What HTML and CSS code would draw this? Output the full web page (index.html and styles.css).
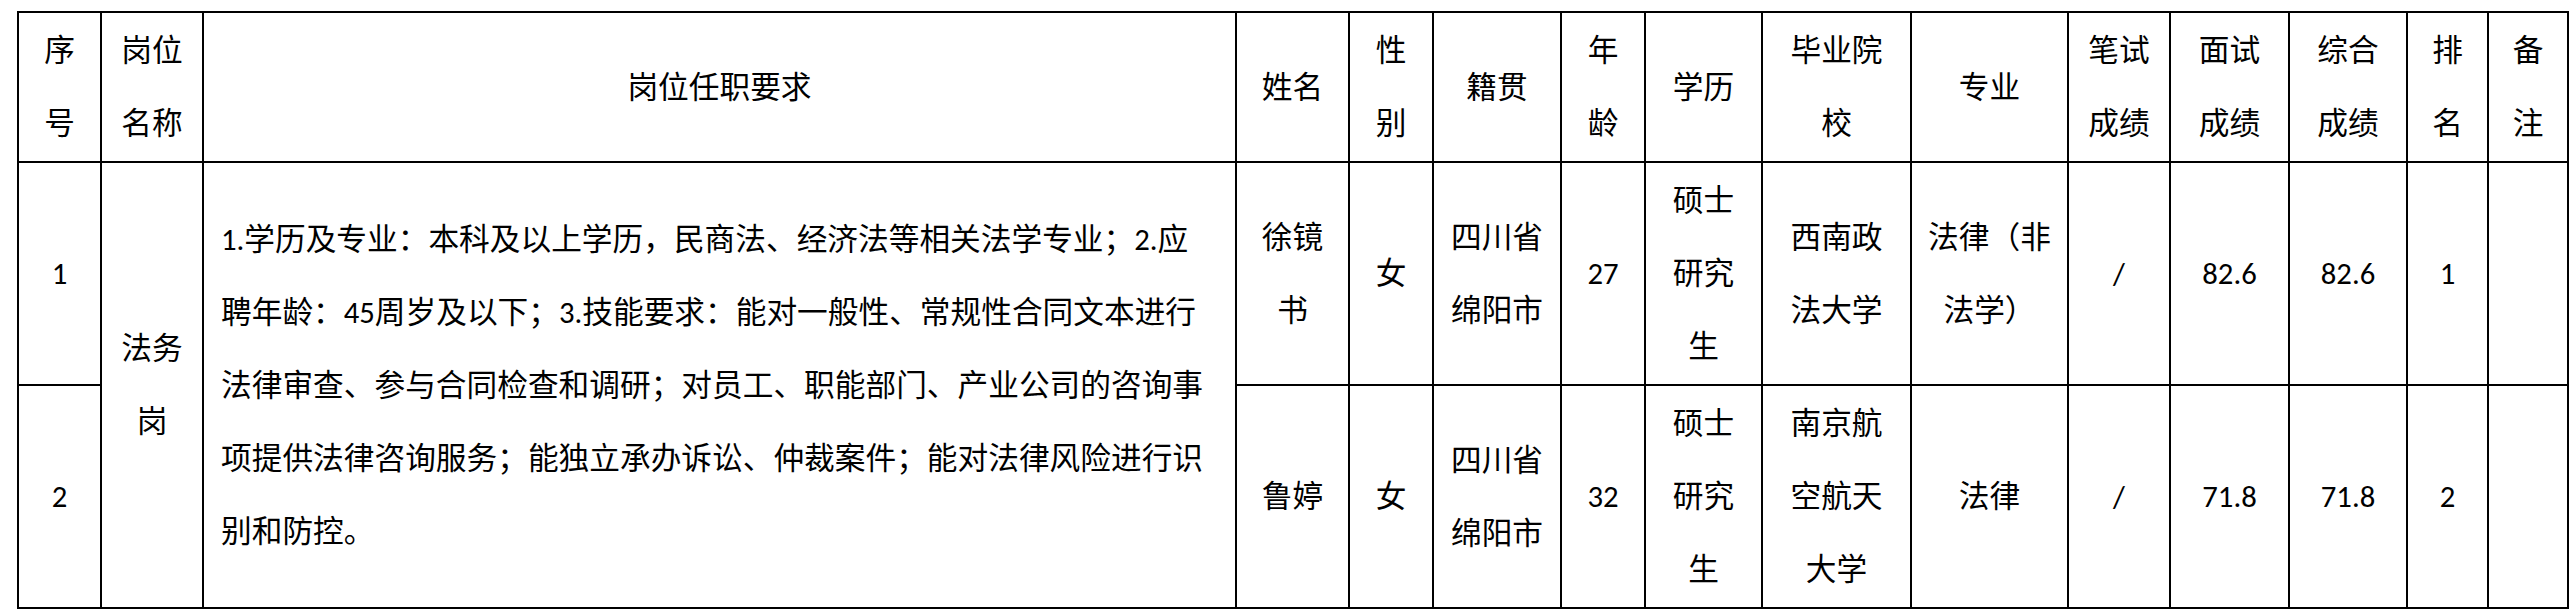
FILE: index.html
```html
<!DOCTYPE html>
<html lang="zh-CN">
<head>
<meta charset="utf-8">
<title>岗位任职要求</title>
<link rel="stylesheet" href="styles.css">
</head>
<body>
<table class="grid">
  <tr class="hdr">
    <th class="c1">序<br>号</th>
    <th class="c2">岗位<br>名称</th>
    <th class="c3">岗位任职要求</th>
    <th class="c4">姓名</th>
    <th class="c5">性<br>别</th>
    <th class="c6">籍贯</th>
    <th class="c7">年<br>龄</th>
    <th class="c8">学历</th>
    <th class="c9">毕业院<br>校</th>
    <th class="c10">专业</th>
    <th class="c11">笔试<br>成绩</th>
    <th class="c12">面试<br>成绩</th>
    <th class="c13">综合<br>成绩</th>
    <th class="c14">排<br>名</th>
    <th class="c15">备<br>注</th>
  </tr>
  <tr class="row">
    <td>1</td>
    <td rowspan="2">法务<br>岗</td>
    <td rowspan="2" class="desc">1.学历及专业：本科及以上学历，民商法、经济法等相关法学专业；2.应<br>聘年龄：45周岁及以下；3.技能要求：能对一般性、常规性合同文本进行<br>法律审查、参与合同检查和调研；对员工、职能部门、产业公司的咨询事<br>项提供法律咨询服务；能独立承办诉讼、仲裁案件；能对法律风险进行识<br>别和防控。</td>
    <td>徐镜<br>书</td>
    <td>女</td>
    <td>四川省<br>绵阳市</td>
    <td>27</td>
    <td>硕士<br>研究<br>生</td>
    <td>西南政<br>法大学</td>
    <td>法律（非<br>法学）</td>
    <td>/</td>
    <td>82.6</td>
    <td>82.6</td>
    <td>1</td>
    <td></td>
  </tr>
  <tr class="row">
    <td>2</td>
    <td>鲁婷</td>
    <td>女</td>
    <td>四川省<br>绵阳市</td>
    <td>32</td>
    <td>硕士<br>研究<br>生</td>
    <td>南京航<br>空航天<br>大学</td>
    <td>法律</td>
    <td>/</td>
    <td>71.8</td>
    <td>71.8</td>
    <td>2</td>
    <td></td>
  </tr>
</table>
</body>
</html>
```

FILE: styles.css
```css
html, body {
  margin: 0;
  padding: 0;
  background: #ffffff;
}

body {
  padding: 11px 0 0 17px;
}

.grid {
  border-collapse: separate;
  border-spacing: 0;
  table-layout: fixed;
  width: 2552px;
  border-top: 2px solid #000;
  border-left: 2px solid #000;
  font-family: Carlito, Lato, "Noto Sans CJK SC", sans-serif;
  font-size: 30.7px;
  line-height: 73px;
  color: #000;
}

.grid th,
.grid td {
  box-sizing: border-box;
  border-right: 2px solid #000;
  border-bottom: 2px solid #000;
  padding: 0;
  text-align: center;
  vertical-align: middle;
  font-weight: normal;
  white-space: nowrap;
}

.hdr { height: 150px; }
.row { height: 223px; }

.c1 { width: 83px; }
.c2 { width: 102px; }
.c3 { width: 1033px; }
.c4 { width: 113px; }
.c5 { width: 84px; }
.c6 { width: 128px; }
.c7 { width: 84px; }
.c8 { width: 117px; }
.c9 { width: 149px; }
.c10 { width: 157px; }
.c11 { width: 102px; }
.c12 { width: 119px; }
.c13 { width: 118px; }
.c14 { width: 81px; }
.c15 { width: 80px; }

.grid td.desc {
  text-align: left;
  padding-left: 17px;
}
```
